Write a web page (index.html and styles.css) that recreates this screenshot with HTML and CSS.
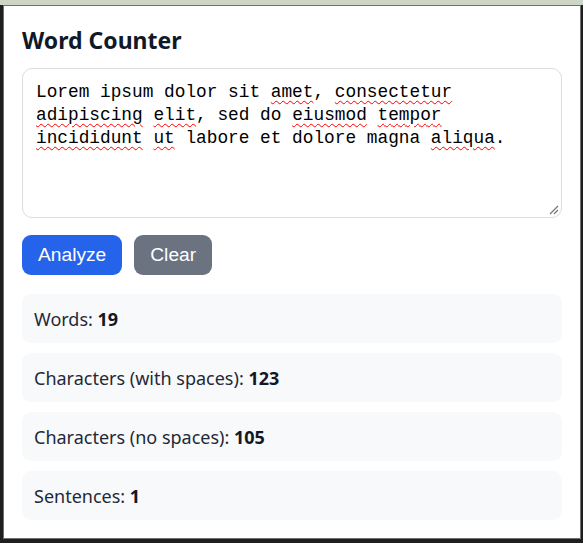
FILE: index.html
```html
<!DOCTYPE html>
<html lang="en">
<head>
<meta charset="utf-8">
<title>Word Counter</title>
<link rel="stylesheet" href="styles.css">
</head>
<body>
<div class="topstrip"></div>
<div class="popup">
  <h1 class="title">Word Counter</h1>
  <div class="input" role="textbox" aria-multiline="true">Lorem ipsum dolor sit <span class="sp">amet</span>, <span class="sp">consectetur</span> <span class="sp">adipiscing</span> <span class="sp">elit</span>, sed do <span class="sp">eiusmod</span> <span class="sp">tempor</span> <span class="sp">incididunt</span> <span class="sp">ut</span> labore et dolore magna <span class="sp">aliqua</span>.<svg class="grip" width="11" height="11" viewBox="0 0 11 11"><path d="M10 2 L2 10 M10 6 L6 10" stroke="#777" stroke-width="1.2" fill="none"/></svg></div>
  <div class="actions">
    <button class="btn btn-primary">Analyze</button>
    <button class="btn btn-secondary">Clear</button>
  </div>
  <div class="stats">
    <div class="stat">Words: <b>19</b></div>
    <div class="stat">Characters (with spaces): <b>123</b></div>
    <div class="stat">Characters (no spaces): <b>105</b></div>
    <div class="stat">Sentences: <b>1</b></div>
  </div>
</div>
</body>
</html>
```
FILE: styles.css
```css
* { box-sizing: border-box; }
html, body {
  margin: 0;
  padding: 0;
  background: #1f1f1f;
  height: 543px;
  overflow: hidden;
}
.topstrip {
  height: 5px;
  background: #cdd6c6;
}
.popup {
  margin-left: 3px;
  width: 578px;
  height: 534px;
  background: #ffffff;
  border: 1px solid #707070;
  padding: 18px 18px 18px 18px;
  font-family: "Noto Sans", "Open Sans", sans-serif;
  color: #1f2937;
}
.title {
  margin: 0 0 12px 0;
  font-size: 23px;
  line-height: 32px;
  font-weight: 700;
  color: #111827;
}
.input {
  position: relative;
  height: 150px;
  border: 1px solid #dddddd;
  border-radius: 10px;
  padding: 12px 13px;
  font-family: "Liberation Mono", "DejaVu Sans Mono", monospace;
  font-size: 17.8px;
  line-height: 23px;
  color: #000;
  white-space: pre-wrap;
}
.sp {
  text-decoration: underline wavy #ff0000;
  text-decoration-thickness: 1px;
  text-underline-offset: 3px;
}
.grip {
  position: absolute;
  right: 2px;
  bottom: 2px;
}
.actions {
  display: flex;
  gap: 12px;
  margin-top: 17px;
}
.btn {
  height: 40px;
  padding: 0 16px;
  border: none;
  border-radius: 9px;
  font-family: "Liberation Sans", Arial, sans-serif;
  font-size: 19.2px;
  color: #fff;
}
.btn-primary { background: #2563eb; }
.btn-secondary { background: #6b7280; }
.stats {
  display: flex;
  flex-direction: column;
  gap: 10px;
  margin-top: 19px;
}
.stat {
  height: 49px;
  padding: 13px 12px 11px 12px;
  background: #f8f9fa;
  border-radius: 9px;
  font-size: 18px;
  line-height: 25px;
  color: #1f2937;
}
.stat b {
  font-weight: 700;
  color: #111827;
}
```
